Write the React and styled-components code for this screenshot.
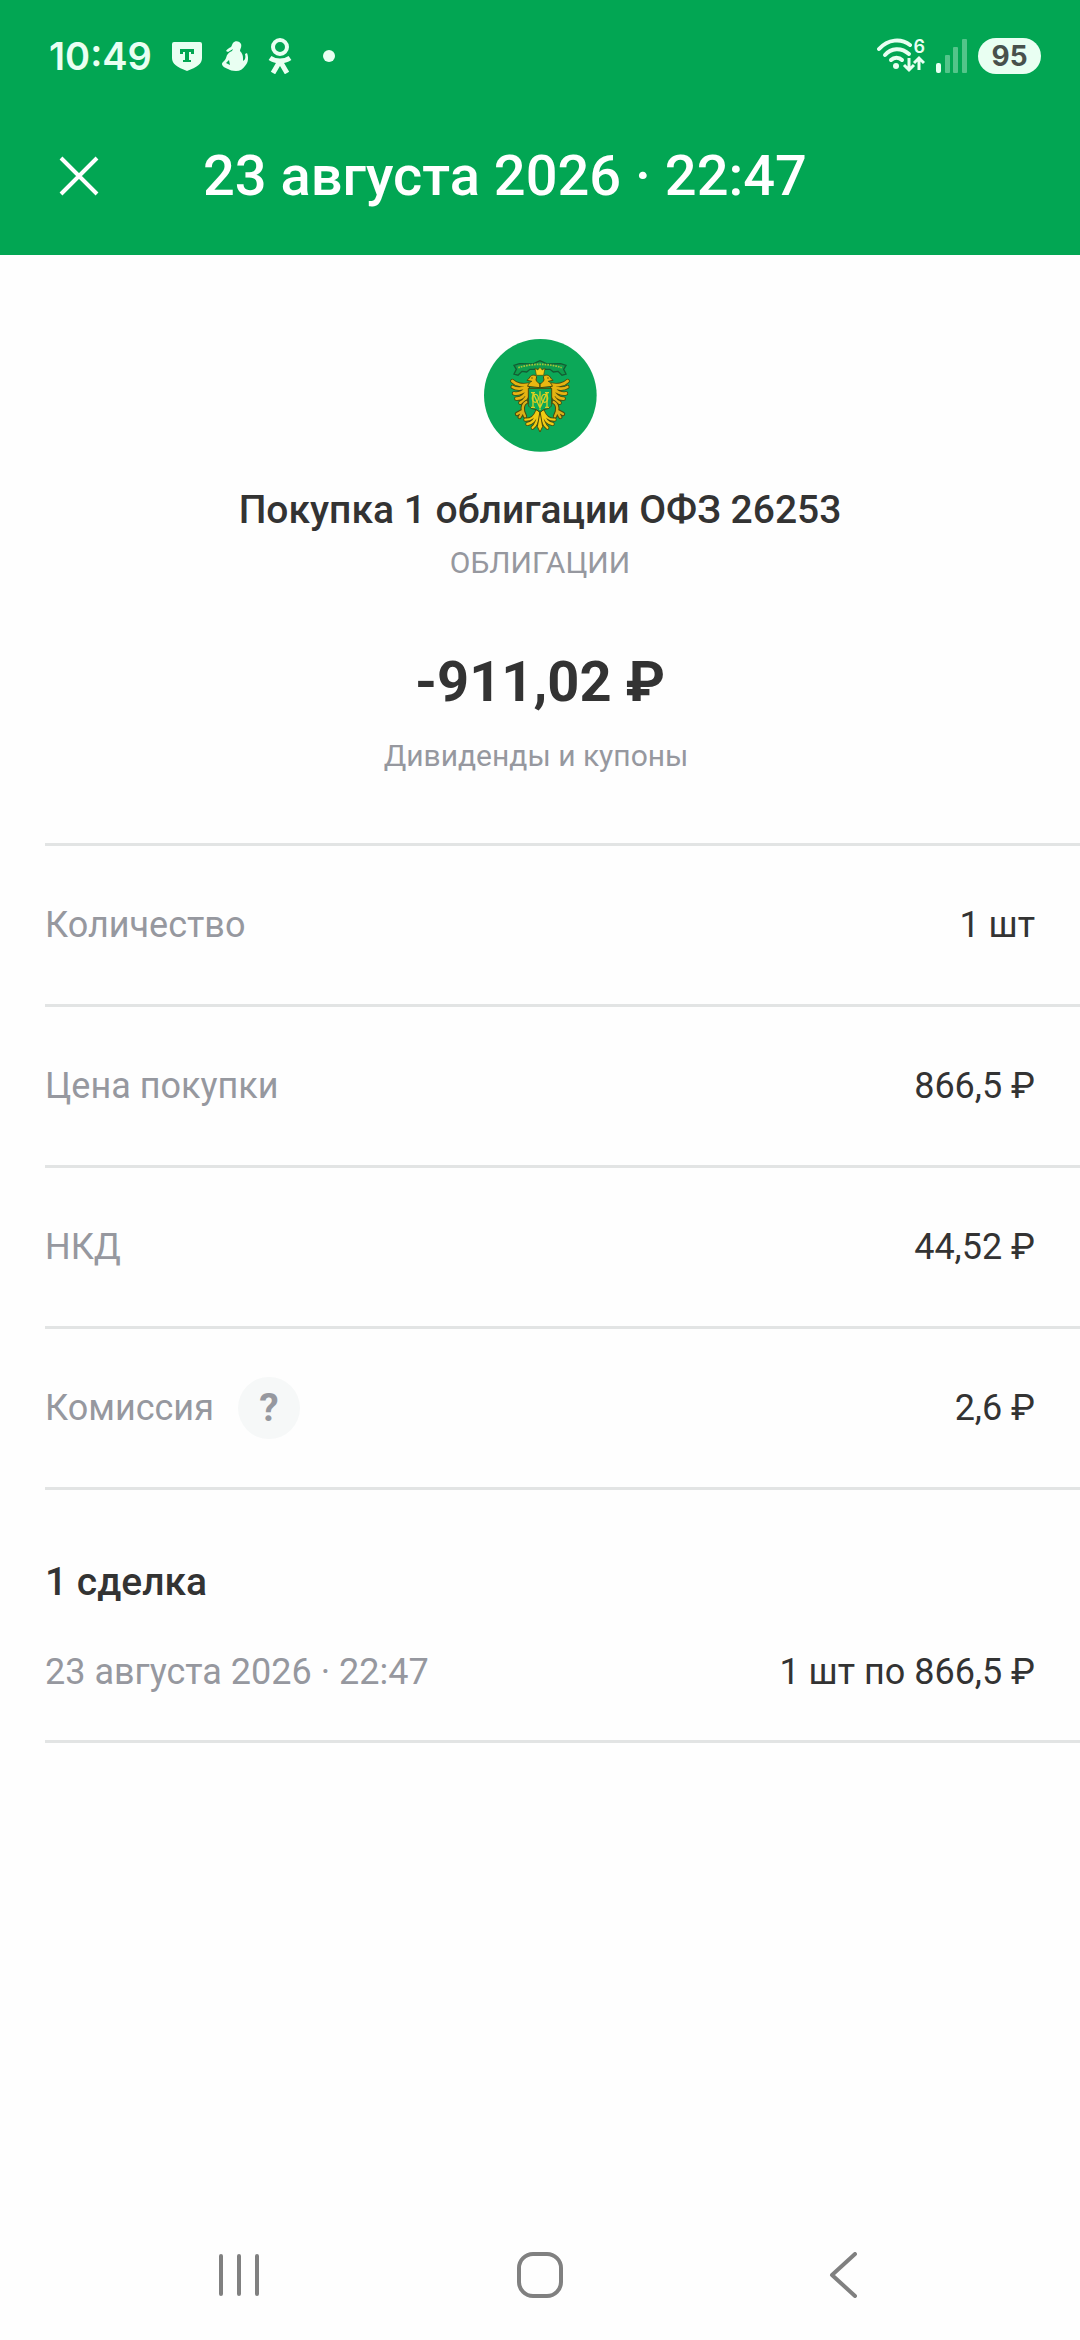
import React from "react";
import styled, { createGlobalStyle } from "styled-components";

const rows = [
  { label: "Количество", value: "1 шт" },
  { label: "Цена покупки", value: "866,5 ₽" },
  { label: "НКД", value: "44,52 ₽" },
  { label: "Комиссия", value: "2,6 ₽", hint: true },
];

const ShieldIcon = () => (
  <svg width="30" height="30" viewBox="0 0 30 30" fill="currentColor">
    <path
      fillRule="evenodd"
      d="M2 1h26q2 0 2 2v14c0 6-5 9-15 13C5 26 0 23 0 17V3q0-2 2-2zM8 8v5h3v-2h2v8h-2v2h8v-2h-2v-8h2v2h3V8z"
    />
  </svg>
);

const FigureIcon = () => (
  <svg width="26" height="30" viewBox="0 0 26 30" fill="currentColor">
    <path
      fillRule="evenodd"
      d="M11 2c2-3 7-2 8 1 1 3-1 5-1 7 2 2 3 4 3 7v3c2-1 3-3 2-7l2-1c2 5 1 10-2 13-2 3-5 5-9 5-4 0-6-1-8-2-3-1-6-3-6-5s3-3 4-6c1-4 3-6 6-7l1-2-5 3-2-1c1-2 3-3 5-4 1-1 1-3 2-4zM7 19l-3 3 4 2z"
    />
  </svg>
);

const OkIcon = () => (
  <svg width="24" height="36" viewBox="0 0 24 36" fill="none" stroke="currentColor">
    <circle cx="12" cy="9" r="7" strokeWidth="4" />
    <path d="M2 20c6 4 14 4 20 0" strokeWidth="5" />
    <path d="M12 23L5 35M12 23l7 12" strokeWidth="5" />
  </svg>
);

const WifiIcon = () => (
  <svg width="48" height="36" viewBox="0 0 48 36" fill="none" stroke="currentColor">
    <path d="M2 11C11 1 24 0 33 7" strokeWidth="4" strokeLinecap="round" />
    <path d="M8 17c6-7 16-8 24-1" strokeWidth="4" strokeLinecap="round" />
    <path d="M14 22c3-3 8-3 11 0" strokeWidth="4" strokeLinecap="round" />
    <circle cx="19" cy="28" r="3" fill="currentColor" stroke="none" />
    <path d="M32 20v12M27 27l5 5 5-5M42 32V20M37 25l5-5 5 5" strokeWidth="3" />
  </svg>
);

const SignalIcon = () => (
  <svg width="31" height="34" viewBox="0 0 31 34" fill="currentColor">
    <rect x="0" y="24" width="5" height="10" rx="2" />
    <g opacity="0.35">
      <rect x="9" y="16" width="5" height="18" rx="1" />
      <rect x="17" y="8" width="5" height="26" rx="1" />
      <rect x="26" y="0" width="5" height="34" rx="1" />
    </g>
  </svg>
);

const CloseIcon = () => (
  <svg width="40" height="40" viewBox="0 0 40 40" fill="none" stroke="currentColor">
    <path d="M2 2l36 36M38 2L2 38" strokeWidth="4" />
  </svg>
);

const feathers =
  "M206 194C190 198 168 194 158 183M204 198C190 208 170 208 159 201M204 203C194 216 176 223 163 220M205 208C197 224 184 237 170 236M206 213C204 230 195 243 182 248";
const leg = "M200 246C190 252 188 262 190 272M190 272L172 282M190 274L180 291M190 274L196 289";
const tail =
  "M232 274C226 290 212 300 197 299M234 277C228 298 216 310 203 312M237 279C234 304 228 316 219 323";

// one half of the eagle, mirrored for the other side
const EagleHalf = () => (
  <g fill="none" strokeLinecap="round">
    <path d={feathers} stroke="#4a4a0c" strokeWidth="13" />
    <path d={feathers} stroke="#e6b312" strokeWidth="8" />
    <path d={leg} stroke="#4a4a0c" strokeWidth="13" />
    <path d={leg} stroke="#d9b018" strokeWidth="7" />
    <path d={tail} stroke="#4a4a0c" strokeWidth="12" />
    <path d={tail} stroke="#f0cb13" strokeWidth="7" />
    <path
      d="M240 203l-36-4c2-8 6-12 12-15l-14-3 7-7c3-9 16-12 22-4l-2 10c3 6 6 9 11 11z"
      fill="#e9b711"
      stroke="#4a4a0c"
      strokeWidth="3"
    />
    <circle cx="217" cy="174" r="2" fill="#4a4a0c" />
  </g>
);

const Emblem = () => (
  <svg width="113" height="113" viewBox="73 57 339 339">
    <circle cx="242" cy="226" r="169" fill="#0ca858" />
    <EagleHalf />
    <g transform="matrix(-1 0 0 1 482 0)">
      <EagleHalf />
    </g>
    <path d="M241 274l8 46-8 16-8-16z" fill="#f0cb13" stroke="#4a4a0c" strokeWidth="3" />
    <path
      d="M163 136l16-5 40 1 22-10 22 10 40-1 16 5-7 12 7 14-12 4-12-12-14 2-10-8h-60l-10 8-14-2-12 12-12-4 7-14z"
      fill="#0f9c4c"
      stroke="#145c33"
      strokeWidth="4"
    />
    <path
      d="M176 143c20-7 44-10 65-10s45 3 65 10"
      stroke="#a3c43a"
      strokeWidth="5"
      strokeDasharray="5 3"
      fill="none"
    />
    <path d="M226 144l8 6 7-8 7 8 8-6-4 22h-22z" fill="#f4cf1c" stroke="#4a4a0c" strokeWidth="2" />
    <path d="M232 168h18v14l-9 8-9-8z" fill="#0ca858" />
    <path
      d="M206 205h70v48c0 10-12 14-24 16l-11 8-11-8c-12-2-24-6-24-16z"
      fill="#0ca858"
      stroke="#4a4a0c"
      strokeWidth="3"
    />
    <g fill="none" stroke="#d8d023" strokeWidth="4">
      <ellipse cx="227" cy="235" rx="9" ry="12" />
      <ellipse cx="255" cy="235" rx="9" ry="12" />
      <path d="M220 262v-44l21 46 21-46v44M241 214v56M214 218h12M256 218h12M214 262h12M256 262h12" />
    </g>
  </svg>
);

const RecentsIcon = () => (
  <svg width="46" height="46" viewBox="0 0 46 46" fill="none" stroke="currentColor">
    <path d="M5 4v38M23 4v38M41 4v38" strokeWidth="4" strokeLinecap="round" />
  </svg>
);

const HomeIcon = () => (
  <svg width="46" height="46" viewBox="0 0 46 46" fill="none" stroke="currentColor">
    <rect x="2" y="2" width="42" height="42" rx="14" strokeWidth="4" />
  </svg>
);

const BackIcon = () => (
  <svg width="46" height="46" viewBox="0 0 46 46" fill="none" stroke="currentColor">
    <path d="M37 2L14 23l23 21" strokeWidth="4" strokeLinecap="round" strokeLinejoin="round" />
  </svg>
);

const App = () => {
  return (
    <Container>
      <GlobalStyle />
      <Header>
        <StatusBar>
          <Time>10:49</Time>
          <Notifications>
            <ShieldIcon />
            <FigureIcon />
            <OkIcon />
          </Notifications>
          <Dot />
          <Indicators>
            <Wifi>
              <WifiIcon />
              <WifiBadge>6</WifiBadge>
            </Wifi>
            <SignalIcon />
            <Battery>95</Battery>
          </Indicators>
        </StatusBar>
        <Toolbar>
          <CloseButton aria-label="Закрыть">
            <CloseIcon />
          </CloseButton>
          <h1>23 августа 2026 · 22:47</h1>
        </Toolbar>
      </Header>
      <Main>
        <Summary>
          <Emblem />
          <h2>Покупка 1 облигации ОФЗ 26253</h2>
          <Caption>ОБЛИГАЦИИ</Caption>
          <Amount>-911,02 ₽</Amount>
          <Account>Дивиденды и купоны</Account>
        </Summary>
        <Details>
          {rows.map((row) => (
            <Row key={row.label}>
              <Label>
                {row.label}
                {row.hint && <HintButton>?</HintButton>}
              </Label>
              <Value>{row.value}</Value>
            </Row>
          ))}
        </Details>
        <Deals>
          <h3>1 сделка</h3>
          <Deal>
            <span>23 августа 2026 · 22:47</span>
            <strong>1 шт по 866,5 ₽</strong>
          </Deal>
        </Deals>
      </Main>
      <NavBar>
        <NavButton aria-label="Недавние">
          <RecentsIcon />
        </NavButton>
        <NavButton aria-label="Домой">
          <HomeIcon />
        </NavButton>
        <NavButton aria-label="Назад">
          <BackIcon />
        </NavButton>
      </NavBar>
    </Container>
  );
};

export default App;

const GlobalStyle = createGlobalStyle`
  * {
    box-sizing: border-box;
    margin: 0;
    padding: 0;
  }
  body {
    background-color: #fefefe;
    color: #333333;
    font-family: Roboto, sans-serif;
  }
  button {
    border: none;
    background: none;
    color: inherit;
    font-family: inherit;
  }
  svg {
    display: block;
    flex-shrink: 0;
  }
`;

const Container = styled.div`
  display: flex;
  flex-direction: column;
  min-height: 100vh;
`;

const Header = styled.header`
  background-color: #02a653;
  color: white;
`;
const StatusBar = styled.div`
  display: flex;
  align-items: center;
  height: 97px;
  padding: 14px 39px 0 49px;
  color: #e9fff2;
  font-family: Inter, sans-serif;
`;
const Time = styled.span`
  font-size: 38px;
  font-weight: 600;
`;
const Notifications = styled.div`
  display: flex;
  align-items: center;
  gap: 20px;
  margin-left: 20px;
`;
const Dot = styled.span`
  width: 12px;
  height: 12px;
  margin-left: 31px;
  border-radius: 50%;
  background-color: currentColor;
`;
const Indicators = styled.div`
  display: flex;
  align-items: center;
  gap: 11px;
  margin-left: auto;
`;
const Wifi = styled.div`
  position: relative;
`;
const WifiBadge = styled.span`
  position: absolute;
  top: -1px;
  right: 0;
  font-size: 18px;
  font-weight: 600;
  line-height: 20px;
`;
const Battery = styled.span`
  width: 63px;
  border-radius: 18px;
  background-color: #e9fff2;
  color: #48514c;
  font-size: 28px;
  font-weight: 700;
  line-height: 36px;
  text-align: center;
`;
const Toolbar = styled.div`
  display: flex;
  align-items: center;
  height: 158px;
  padding: 0 45px;

  h1 {
    margin-left: 90px;
    font-size: 56px;
    font-weight: 500;
  }
`;
const CloseButton = styled.button`
  display: flex;
  justify-content: center;
  width: 68px;
`;

const Main = styled.main`
  flex: 1;
`;
const Summary = styled.section`
  display: flex;
  flex-direction: column;
  align-items: center;
  padding: 84px 45px 67px;

  h2 {
    margin-top: 34px;
    font-size: 39px;
    font-weight: 500;
    line-height: 48px;
  }
`;
const Caption = styled.p`
  margin-top: 9px;
  color: #96989f;
  font-size: 30px;
  line-height: 40px;
`;
const Amount = styled.p`
  margin-top: 66px;
  font-size: 56px;
  font-weight: 700;
  line-height: 66px;
`;
const Account = styled(Caption)`
  margin-top: 21px;
  padding-right: 8px;
`;

const Details = styled.dl`
  margin-left: 45px;
  border-top: 3px solid #e2e4e4;
`;
const Row = styled.div`
  display: flex;
  align-items: center;
  justify-content: space-between;
  height: 161px;
  padding-right: 45px;
  border-bottom: 3px solid #e2e4e4;
  font-size: 36px;
`;
const Label = styled.dt`
  display: flex;
  align-items: center;
  gap: 24px;
  color: #96989f;
`;
const Value = styled.dd``;
const HintButton = styled.button`
  width: 62px;
  height: 62px;
  border-radius: 50%;
  background-color: #f6f8f8;
  font-size: 39px;
  font-weight: 700;
`;

const Deals = styled.section`
  margin-left: 45px;
  padding: 68px 45px 46px 0;
  border-bottom: 3px solid #e2e4e4;

  h3 {
    font-size: 39px;
    font-weight: 500;
    line-height: 48px;
  }
`;
const Deal = styled.div`
  display: flex;
  justify-content: space-between;
  margin-top: 44px;
  font-size: 36px;
  line-height: 44px;

  span {
    color: #96989f;
  }
  strong {
    font-weight: 400;
  }
`;

const NavBar = styled.nav`
  display: grid;
  grid-template-columns: repeat(3, 1fr);
  padding: 0 88px;
  color: #808080;
`;
const NavButton = styled.button`
  display: flex;
  align-items: center;
  justify-content: center;
  height: 130px;
`;
